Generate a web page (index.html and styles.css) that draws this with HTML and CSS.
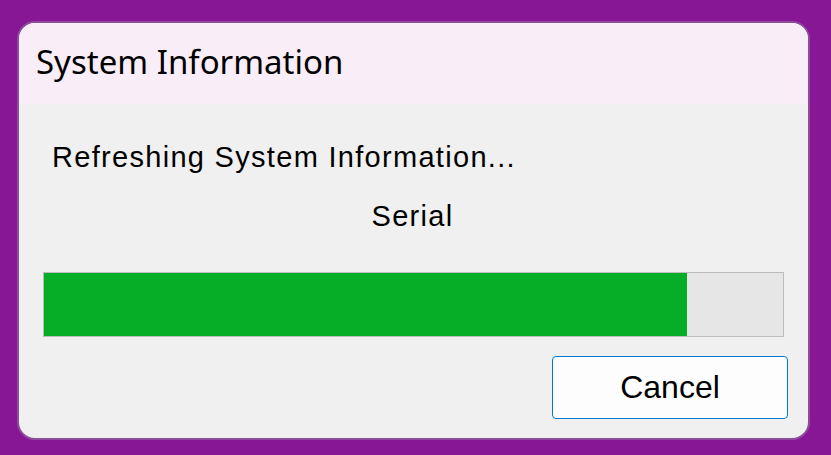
FILE: index.html
```html
<!DOCTYPE html>
<html>
<head>
<meta charset="utf-8">
<link rel="stylesheet" href="styles.css">
</head>
<body>
<div class="window">
  <div class="titlebar">System Information</div>
  <div class="content">
    <div class="status">Refreshing System Information...</div>
    <div class="step">Serial</div>
    <div class="progress"><div class="fill" style="width: 87%"></div></div>
    <div class="actions"><button class="btn">Cancel</button></div>
  </div>
</div>
</body>
</html>
```

FILE: styles.css
```css
html, body {
  margin: 0;
  padding: 0;
  background: #881796;
  width: 831px;
  height: 455px;
  overflow: hidden;
}
.window {
  box-sizing: border-box;
  margin: 21px 0 0 17px;
  width: 793px;
  height: 419px;
  border: 2px solid #8e4d9a;
  border-radius: 18px;
  overflow: hidden;
  background: #f0f0f0;
  display: flex;
  flex-direction: column;
}
.titlebar {
  height: 81px;
  background: #f9eef8;
  font-family: "Noto Sans", sans-serif;
  font-size: 33px;
  color: #000;
  padding-left: 17px;
  display: flex;
  align-items: center;
  box-sizing: border-box;
  padding-bottom: 4px;
}
.content {
  flex: 1;
  display: flex;
  flex-direction: column;
  padding: 0 20px 0 24px;
  font-family: "Liberation Sans", Arial, sans-serif;
  color: #000;
}
.status {
  font-size: 29px;
  letter-spacing: 1.3px;
  margin-top: 37px;
  padding-left: 9px;
  line-height: 32px;
}
.step {
  font-size: 29px;
  letter-spacing: 1.3px;
  line-height: 32px;
  margin-top: 27px;
  text-align: center;
  padding-right: 6px;
}
.progress {
  margin-top: 40px;
  height: 65px;
  box-sizing: border-box;
  border: 1px solid #bcbcbc;
  background: #e6e6e6;
  width: 741px;
}
.fill {
  height: 100%;
  background: #06ae28;
}
.actions {
  display: flex;
  justify-content: flex-end;
  margin-top: 19px;
}
.btn {
  width: 236px;
  height: 63px;
  box-sizing: border-box;
  border: 1px solid #0078d4;
  border-radius: 4px;
  background: #fdfdfd;
  font-family: "Liberation Sans", Arial, sans-serif;
  font-size: 32px;
  color: #000;
  padding: 0;
}
```
